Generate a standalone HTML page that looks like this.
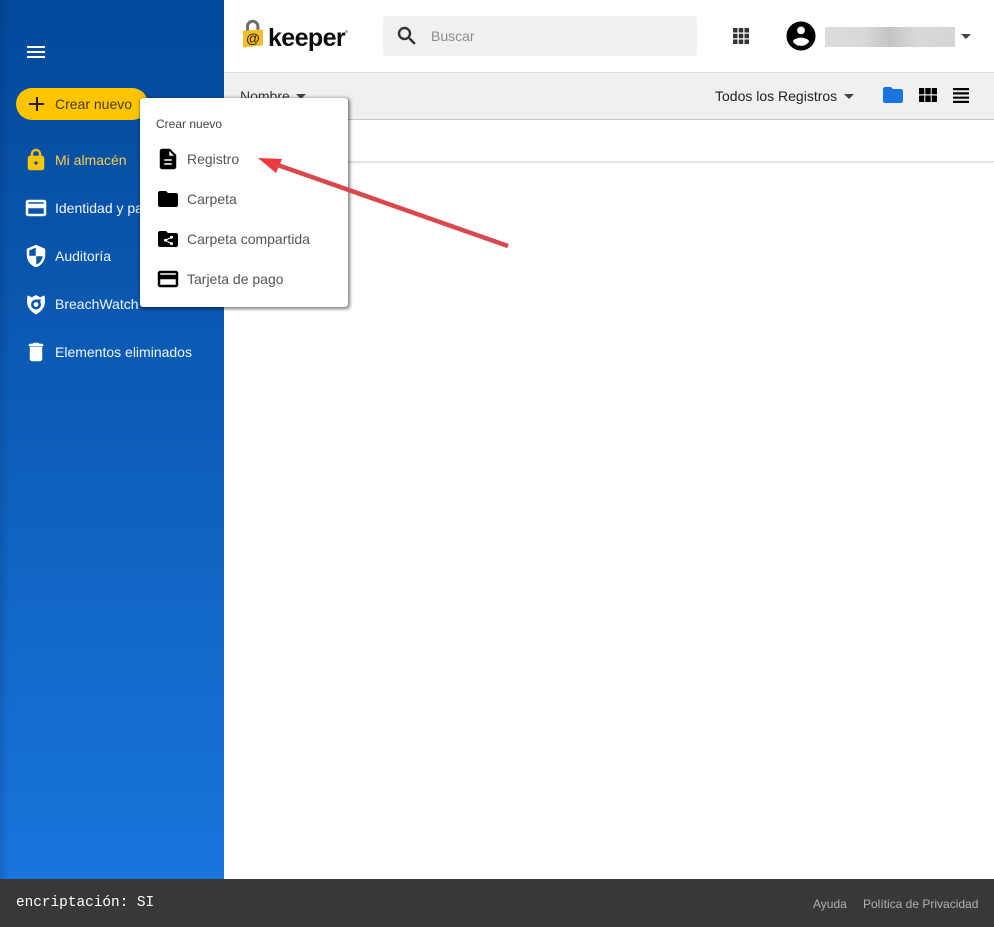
<!DOCTYPE html>
<html lang="es">
<head>
<meta charset="utf-8">
<title>Keeper</title>
<style>
html,body{margin:0;padding:0;width:994px;height:927px;overflow:hidden;background:#fff;font-family:"Liberation Sans",sans-serif;}
*{box-sizing:border-box;}
.a{position:absolute;}
.t{position:absolute;white-space:nowrap;font-size:14px;line-height:18px;}
svg{position:absolute;display:block;}
#side{left:0;top:0;width:224px;height:879px;background:linear-gradient(180deg,#03499b 0%,#0853aa 25%,#0e61bd 55%,#1a75dd 100%);}
#edge{left:0;top:0;width:10px;height:879px;background:linear-gradient(90deg,rgba(0,20,60,.14),rgba(0,20,60,0));}
.nav{color:#f2f8ff;}
.m{color:#555;}
.h path{stroke-width:.5;stroke:currentColor;}
</style>
</head>
<body>
<div id="side" class="a"></div>
<div id="edge" class="a"></div>

<!-- hamburger -->
<div class="a" style="left:27px;top:46px;width:18px;height:2px;background:#fff"></div>
<div class="a" style="left:27px;top:51px;width:18px;height:2px;background:#fff"></div>
<div class="a" style="left:27px;top:56px;width:18px;height:2px;background:#fff"></div>

<!-- create button -->
<div class="a" style="left:16px;top:88px;width:132px;height:32px;border-radius:16px;background:#fdc500"></div>
<div class="a" style="left:29px;top:103px;width:15px;height:2px;background:#2c1a10"></div>
<div class="a" style="left:35.5px;top:97px;width:2px;height:14px;background:#2c1a10"></div>
<div class="t" style="left:55px;top:95px;color:#4a3a10">Crear nuevo</div>

<!-- nav -->
<svg class="h" style="left:24px;top:148px;color:#fdc500" width="24" height="24" viewBox="0 0 24 24"><path fill="#fdc500" d="M18 8h-1V6c0-2.76-2.24-5-5-5S7 3.24 7 6v2H6c-1.100 0-2 .9-2 2v10c0 1.100.9 2 2 2h12c1.100 0 2-.9 2-2V10c0-1.100-.9-2-2-2zm-6 9c-1.100 0-2-.9-2-2s.9-2 2-2 2 .9 2 2-.9 2-2 2zm3.100-9H8.900V6c0-1.710 1.390-3.100 3.100-3.100 1.710 0 3.100 1.390 3.100 3.100v2z"/></svg>
<div class="t" style="left:55px;top:151px;color:#f5cf4e">Mi almacén</div>

<svg class="h" style="left:24px;top:196px;color:#fff" width="24" height="24" viewBox="0 0 24 24"><path fill="#fff" d="M20 4H4c-1.110 0-1.990.89-1.990 2L2 18c0 1.110.89 2 2 2h16c1.110 0 2-.89 2-2V6c0-1.110-.89-2-2-2zm0 14H4v-6h16v6zm0-10H4V6h16v2z"/></svg>
<div class="t nav" style="left:55px;top:199px">Identidad y pagos</div>

<svg class="h" style="left:24px;top:244px;color:#fff" width="24" height="24" viewBox="0 0 24 24"><path fill="#fff" d="M12 1L3 5v6c0 5.550 3.840 10.740 9 12 5.160-1.260 9-6.450 9-12V5l-9-4zm0 10.990h7c-.53 4.120-3.280 7.790-7 8.940V12H5V6.300l7-3.110v8.800z"/></svg>
<div class="t nav" style="left:55px;top:247px">Auditoría</div>

<svg style="left:24px;top:292px" width="24" height="24" viewBox="0 0 24 24"><path fill="#fff" fill-rule="evenodd" d="M3.500 3.500l4.500 1.700L12 3l4 2.200 4.500-1.700c.5 2.500.6 5.500.2 8.500-.6 4.300-4.300 8-8.700 10.500C7.600 20 3.900 16.300 3.300 12 2.900 9 3 6 3.500 3.500zm8.500 4a5 5 0 1 0 0 10 5 5 0 0 0 0-10z"/><circle cx="12" cy="12.500" r="2.400" fill="#fff"/><path fill="#0a56ad" d="M13 7.500h4l-1.300 4-2-1.200z"/></svg>
<div class="t nav" style="left:55px;top:295px">BreachWatch</div>

<svg class="h" style="left:24px;top:340px;color:#fff" width="24" height="24" viewBox="0 0 24 24"><path fill="#fff" d="M6 19c0 1.100.9 2 2 2h8c1.100 0 2-.9 2-2V7H6v12zM19 4h-3.500l-1-1h-5l-1 1H5v2h14V4z"/></svg>
<div class="t nav" style="left:55px;top:343px">Elementos eliminados</div>

<!-- logo -->
<svg style="left:241px;top:18px" width="24" height="32" viewBox="0 0 24 32">
  <path d="M6.500 13V8.500a5.200 5.200 0 0 1 10.400 0V13" fill="none" stroke="#6d6d6d" stroke-width="3"/>
  <path d="M2.500 12.500L21 11.500c.6 0 1 .4 1 1v14c0 .6-.4 1-1 1l-18 2c-.6 0-1-.4-1-1v-15z" fill="#f4bd2c"/>
  <text x="12" y="25" text-anchor="middle" font-family="Liberation Sans,sans-serif" font-size="14" font-weight="bold" fill="#3a2a05">@</text>
</svg>
<div class="t" style="left:268px;top:23px;font-size:25px;line-height:30px;font-weight:bold;color:#0c0c0c;letter-spacing:-.6px">keeper</div>
<div class="a" style="left:345px;top:30px;width:3px;height:3px;border-radius:50%;background:#aaa"></div>

<!-- search -->
<div class="a" style="left:383px;top:16px;width:314px;height:40px;background:#f0f0f0;border-radius:3px"></div>
<svg class="h" style="left:395px;top:24px;color:#333" width="24" height="24" viewBox="0 0 24 24"><path fill="#333" d="M15.500 14h-.79l-.28-.27C15.410 12.590 16 11.110 16 9.500 16 5.910 13.090 3 9.500 3S3 5.910 3 9.500 5.910 16 9.500 16c1.610 0 3.090-.59 4.230-1.570l.27.28v.79l5 4.990L20.490 19l-4.990-5zm-6 0C7.010 14 5 11.990 5 9.500S7.010 5 9.500 5 14 7.010 14 9.500 11.990 14 9.500 14z"/></svg>
<div class="t" style="left:431px;top:27px;color:#8e8e8e">Buscar</div>

<!-- apps -->
<svg style="left:733px;top:28px" width="16" height="16" viewBox="0 0 16 16"><path fill="#333" d="M0 0h4.500v4.500H0zM5.750 0h4.500v4.500h-4.500zM11.500 0H16v4.500h-4.500zM0 5.750h4.500v4.500H0zM5.750 5.750h4.500v4.500h-4.500zM11.500 5.750H16v4.500h-4.500zM0 11.500h4.500V16H0zM5.750 11.500h4.500V16h-4.500zM11.500 11.500H16V16h-4.500z"/></svg>

<!-- account -->
<svg class="h" style="left:784px;top:19px;color:#000" width="34" height="34" viewBox="0 0 24 24"><path fill="#000" d="M12 2C6.480 2 2 6.480 2 12s4.480 10 10 10 10-4.480 10-10S17.520 2 12 2zm0 3c1.660 0 3 1.340 3 3s-1.340 3-3 3-3-1.340-3-3 1.340-3 3-3zm0 14.200c-2.500 0-4.710-1.280-6-3.220.03-1.990 4-3.080 6-3.080 1.990 0 5.970 1.090 6 3.080-1.290 1.940-3.500 3.220-6 3.220z"/></svg>
<div class="a" style="left:825px;top:27px;width:130px;height:20px;background:linear-gradient(90deg,#dcdcdc 0%,#d9d9d9 30%,#c4c4c4 50%,#d8d8d8 70%,#d6d6d6 100%)"></div>
<div class="a" style="left:961px;top:34px;width:0;height:0;border-left:5.500px solid transparent;border-right:5.500px solid transparent;border-top:5px solid #444"></div>

<!-- toolbar -->
<div class="a" style="left:224px;top:72px;width:770px;height:48px;background:#f0f0f0;border-top:1px solid #dcdcdc;border-bottom:1px solid #c8c8c8"></div>
<div class="t" style="left:240px;top:87px;color:#333">Nombre</div>
<div class="a" style="left:296px;top:94px;width:0;height:0;border-left:5.500px solid transparent;border-right:5.500px solid transparent;border-top:5px solid #444"></div>
<div class="t" style="left:715px;top:87px;color:#222">Todos los Registros</div>
<div class="a" style="left:844px;top:94px;width:0;height:0;border-left:5.500px solid transparent;border-right:5.500px solid transparent;border-top:5px solid #444"></div>
<svg style="left:881px;top:83px" width="24" height="24" viewBox="0 0 24 24"><path fill="#1a73e0" d="M10 4H4c-1.100 0-1.990.9-1.990 2L2 18c0 1.100.9 2 2 2h16c1.100 0 2-.9 2-2V8c0-1.100-.9-2-2-2h-8l-2-2z"/></svg>
<svg style="left:919px;top:88px" width="18" height="14" viewBox="0 0 18 14"><path fill="#000" d="M0 0h5.300v6.300H0zM6.300 0h5.400v6.300H6.300zM12.700 0H18v6.300h-5.300zM0 7.500h5.300V14H0zM6.300 7.500h5.400V14H6.300zM12.700 7.500H18V14h-5.300z"/></svg>
<svg style="left:953px;top:88px" width="16" height="15" viewBox="0 0 16 15"><path fill="#000" d="M0 0h16v2.200H0zM0 4.300h16v2.200H0zM0 8.600h16v2.200H0zM0 12.800h16V15H0z"/></svg>

<!-- sub bar -->
<div class="a" style="left:224px;top:120px;width:770px;height:42px;background:#fff;border-bottom:1px solid #ddd;box-shadow:0 1px 2px rgba(0,0,0,.12)"></div>

<!-- menu -->
<div class="a" style="left:140px;top:98px;width:208px;height:209px;background:#fff;border-radius:3px;box-shadow:1px 1px 3px 1px rgba(0,0,0,.5)"></div>
<div class="t" style="left:156px;top:116px;font-size:12px;line-height:16px;color:#444">Crear nuevo</div>

<svg class="h" style="left:156px;top:147px;color:#000" width="24" height="24" viewBox="0 0 24 24"><path fill="#000" d="M14 2H6c-1.100 0-1.990.9-1.990 2L4 20c0 1.100.89 2 1.990 2H18c1.100 0 2-.9 2-2V8l-6-6zm2 16H8v-2h8v2zm0-4H8v-2h8v2zm-3-5V3.500L18.500 9H13z"/></svg>
<div class="t m" style="left:187px;top:150px">Registro</div>

<svg style="left:156px;top:187px" width="24" height="24" viewBox="0 0 24 24"><path fill="#000" d="M10 4H4c-1.100 0-1.990.9-1.990 2L2 18c0 1.100.9 2 2 2h16c1.100 0 2-.9 2-2V8c0-1.100-.9-2-2-2h-8l-2-2z"/></svg>
<div class="t m" style="left:187px;top:190px">Carpeta</div>

<svg style="left:156px;top:227px" width="24" height="24" viewBox="0 0 24 24"><path fill="#000" d="M10 4H4c-1.100 0-1.990.9-1.990 2L2 18c0 1.100.9 2 2 2h16c1.100 0 2-.9 2-2V8c0-1.100-.9-2-2-2h-8l-2-2z"/><path d="M15.500 10.200L9.500 13.300l6 3.300" fill="none" stroke="#fff" stroke-width="1.100"/><circle cx="15.500" cy="10.200" r="1.500" fill="#fff"/><circle cx="9.500" cy="13.300" r="1.500" fill="#fff"/><circle cx="15.500" cy="16.600" r="1.500" fill="#fff"/></svg>
<div class="t m" style="left:187px;top:230px">Carpeta compartida</div>

<svg class="h" style="left:156px;top:267px;color:#000" width="24" height="24" viewBox="0 0 24 24"><path fill="#000" d="M20 4H4c-1.110 0-1.990.89-1.990 2L2 18c0 1.110.89 2 2 2h16c1.110 0 2-.89 2-2V6c0-1.110-.89-2-2-2zm0 14H4v-6h16v6zm0-10H4V6h16v2z"/></svg>
<div class="t m" style="left:187px;top:270px">Tarjeta de pago</div>

<!-- arrow -->
<svg style="left:0;top:0" width="994" height="927" viewBox="0 0 994 927">
  <line x1="508" y1="246" x2="272" y2="163" stroke="#d8474c" stroke-width="4.500"/>
  <polygon points="258,158 282,159 276,173" fill="#ee3a3e"/>
</svg>

<!-- footer -->
<div class="a" style="left:0;top:879px;width:994px;height:48px;background:#383838"></div>
<div class="t" style="left:16px;top:894px;font-family:'Liberation Mono',monospace;font-size:14.400px;color:#fff">encriptación: SI</div>
<div class="t" style="left:813px;top:895px;font-size:12px;color:#b0b0b0">Ayuda</div>
<div class="t" style="left:863px;top:895px;font-size:12px;color:#b0b0b0">Política de Privacidad</div>
</body>
</html>
